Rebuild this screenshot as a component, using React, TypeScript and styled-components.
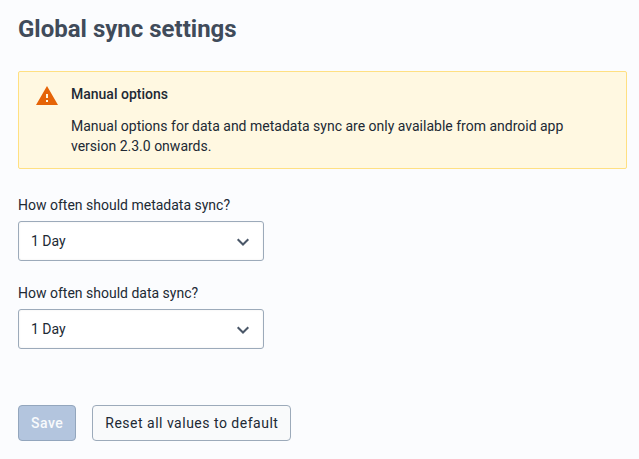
import React from 'react';
import styled, { createGlobalStyle } from 'styled-components';

const GlobalStyle = createGlobalStyle`
  *, *::before, *::after { box-sizing: border-box; }
  body {
    margin: 0;
    background: #fbfcfe;
    color: #212934;
    font-family: Roboto, sans-serif;
    font-size: 14px;
    overflow: hidden;
  }
`;

const Page = styled.main`
  display: flex;
  flex-direction: column;
  align-items: flex-start;
  height: 459px;
  padding: 14px 12px 0 18px;
`;

const Title = styled.h1`
  margin: 0 0 27px;
  font-size: 24px;
  font-weight: 700;
  line-height: 30px;
  color: #404b5a;
`;

const Notice = styled.section`
  display: flex;
  width: 100%;
  height: 98px;
  margin-bottom: 26px;
  padding: 12px 15px 0 16px;
  border: 1px solid #ffe082;
  border-radius: 2px;
  background: #fff8e1;
`;

const NoticeIcon = styled.svg`
  flex: none;
  width: 24px;
  height: 24px;
  margin-right: 12px;
`;

const NoticeTitle = styled.h2`
  margin: 0 0 12px;
  font-size: 14px;
  font-weight: 500;
  line-height: 20px;
`;

const NoticeText = styled.p`
  width: 510px;
  margin: 0;
  line-height: 20px;
`;

const Field = styled.div`
  margin-bottom: 22px;
`;

const Label = styled.label`
  display: block;
  height: 20px;
  margin-bottom: 6px;
  line-height: 20px;
`;

const Select = styled.button`
  display: flex;
  align-items: center;
  justify-content: space-between;
  width: 246px;
  height: 40px;
  padding: 0 11px 0 12px;
  border: 1px solid #9caaba;
  border-radius: 3px;
  background: #fff;
  color: inherit;
  font: inherit;
  box-shadow: inset 0 0 2px rgba(48, 54, 60, 0.1);
`;

const Actions = styled.div`
  display: flex;
  gap: 16px;
  margin-top: 34px;
`;

const Button = styled.button<{ $primary?: boolean }>`
  height: 36px;
  padding: 0 12px;
  border: 1px solid ${(p) => (p.$primary ? '#93a6bd' : '#9caaba')};
  border-radius: 4px;
  background: ${(p) => (p.$primary ? '#b3c5de' : '#f9fafb')};
  color: ${(p) => (p.$primary ? '#f8fafc' : '#212934')};
  font-family: inherit;
  font-size: 14px;
  font-weight: ${(p) => (p.$primary ? 500 : 400)};
  letter-spacing: 0.5px;
`;

const Chevron = () => (
  <svg width="18" height="18" viewBox="0 0 18 18" fill="none">
    <path d="M3.7 7.2L9 12.5l5.3-5.3" stroke="#4a5768" strokeWidth="2" />
  </svg>
);

const fields = [
  { id: 'metadata-sync', label: 'How often should metadata sync?', value: '1 Day' },
  { id: 'data-sync', label: 'How often should data sync?', value: '1 Day' },
];

export default function App() {
  return (
    <>
      <GlobalStyle />
      <Page>
        <Title>Global sync settings</Title>
        <Notice>
          <NoticeIcon viewBox="0 0 24 24">
            <path d="M1 21h22L12 2 1 21zm12-3h-2v-2h2v2zm0-4h-2v-4h2v4z" fill="#e56408" />
          </NoticeIcon>
          <div>
            <NoticeTitle>Manual options</NoticeTitle>
            <NoticeText>
              Manual options for data and metadata sync are only available from android app version 2.3.0 onwards.
            </NoticeText>
          </div>
        </Notice>
        {fields.map((f) => (
          <Field key={f.id}>
            <Label htmlFor={f.id}>{f.label}</Label>
            <Select id={f.id} type="button">
              {f.value}
              <Chevron />
            </Select>
          </Field>
        ))}
        <Actions>
          <Button $primary disabled>Save</Button>
          <Button>Reset all values to default</Button>
        </Actions>
      </Page>
    </>
  );
}
